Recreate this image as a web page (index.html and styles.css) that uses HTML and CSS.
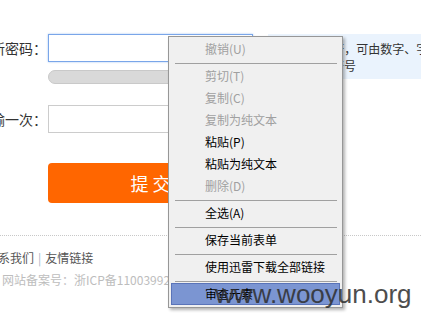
FILE: index.html
```html
<!DOCTYPE html>
<html lang="zh-CN">
<head>
<meta charset="utf-8">
<title>修改密码</title>
<link rel="stylesheet" href="styles.css">
</head>
<body>
<div class="page">
  <div class="row row-pwd">
    <label class="lbl">新密码：</label>
    <div class="field">
      <input class="inp inp-focus" type="password">
      <div class="strength"></div>
    </div>
    <div class="hint">6-20位字符，可由数字、字<br>母、特殊符号</div>
  </div>
  <div class="row row-confirm">
    <label class="lbl">再输一次：</label>
    <div class="field">
      <input class="inp" type="password">
    </div>
  </div>
  <div class="row row-submit">
    <div class="lbl"></div>
    <button class="submit" type="button">提 交</button>
  </div>
  <div class="footer">
    <div class="links"><a class="link">联系我们</a><span class="sep">|</span><a class="link">友情链接</a></div>
    <div class="icp">网站备案号：浙ICP备11003992号</div>
  </div>
</div>

<div class="ctx-menu">
  <div class="item disabled">撤销(U)</div>
  <div class="divider"></div>
  <div class="item disabled">剪切(T)</div>
  <div class="item disabled">复制(C)</div>
  <div class="item disabled">复制为纯文本</div>
  <div class="item">粘贴(P)</div>
  <div class="item">粘贴为纯文本</div>
  <div class="item disabled">删除(D)</div>
  <div class="divider"></div>
  <div class="item">全选(A)</div>
  <div class="divider"></div>
  <div class="item">保存当前表单</div>
  <div class="divider"></div>
  <div class="item">使用迅雷下载全部链接</div>
  <div class="divider"></div>
  <div class="item active">审查元素</div>
</div>

<div class="watermark">www.wooyun.org</div>
</body>
</html>
```
FILE: styles.css
```css
html, body {
  margin: 0;
  padding: 0;
  background: #ffffff;
}
body {
  width: 421px;
  height: 321px;
  overflow: hidden;
  position: relative;
  font-family: "Noto Sans CJK SC", "Microsoft YaHei", sans-serif;
  color: #333;
}
.page {
  padding-top: 34px;
}
.row {
  display: flex;
  align-items: flex-start;
}
.lbl {
  flex: 0 0 47px;
  width: 47px;
  margin-right: 1px;
  height: 28px;
  display: flex;
  align-items: center;
  justify-content: flex-end;
  white-space: nowrap;
  font-size: 14px;
  color: #333;
}
.field {
  width: 205px;
  flex: 0 0 205px;
}
.inp {
  display: block;
  box-sizing: border-box;
  width: 205px;
  height: 28px;
  margin: 0;
  padding: 0 6px;
  border: 1px solid #cccccc;
  background: #fff;
  outline: none;
}
.inp-focus {
  border-color: #7aa6e9;
  box-shadow: 0 0 2px #a9c7f2;
}
.strength {
  margin-top: 8px;
  box-sizing: border-box;
  height: 14px;
  border-radius: 7px;
  background: #d9d9d9;
  border: 1px solid #c9c9c9;
}
.hint {
  flex: 1 1 auto;
  margin-left: 15px;
  box-sizing: border-box;
  height: 45px;
  padding: 6px 0 0 16px;
  background: #eaf3fd;
  font-size: 12px;
  line-height: 17px;
  color: #333;
  white-space: nowrap;
  overflow: hidden;
}
.row-confirm {
  margin-top: 21px;
}
.row-submit {
  margin-top: 30px;
}
.submit {
  width: 205px;
  height: 40px;
  margin: 0;
  padding: 0;
  border: none;
  border-radius: 4px;
  background: #ff6600;
  color: #ffffff;
  font-family: "Noto Sans CJK SC", sans-serif;
  font-size: 18px;
  line-height: 40px;
}
.footer {
  margin-top: 32px;
  border-top: 1px dotted #c8c8c8;
  padding-top: 12px;
  font-size: 12px;
}
.links {
  margin-left: -14px;
  line-height: 20px;
  white-space: nowrap;
  color: #555;
}
.link {
  color: #555;
}
.sep {
  margin: 0 4px;
  color: #a9b6c8;
}
.icp {
  margin-top: 2px;
  margin-left: 2px;
  line-height: 20px;
  white-space: nowrap;
  color: #bdbdbd;
}

/* context menu overlay */
.ctx-menu {
  position: absolute;
  left: 168px;
  top: 36px;
  width: 175px;
  box-sizing: border-box;
  padding: 1px 2px 2px 2px;
  background: #f0f0f0;
  border: 1px solid #979797;
  box-shadow: 2px 2px 3px rgba(0, 0, 0, 0.3);
  font-family: "Noto Sans CJK SC", sans-serif;
  font-size: 12px;
}
.item {
  box-sizing: border-box;
  height: 22px;
  line-height: 22px;
  padding-left: 34px;
  color: #000;
  white-space: nowrap;
}
.item.disabled {
  color: #a0a0a0;
}
.item.active {
  background: #7b95d2;
  border: 1px solid #5a74b9;
  line-height: 20px;
  padding-left: 33px;
}
.divider {
  height: 0;
  margin: 3px 3px 1px 4px;
  border-top: 1px solid #a0a0a0;
}

.watermark {
  position: absolute;
  left: 215px;
  top: 281px;
  font-family: "Liberation Sans", Arial, sans-serif;
  font-size: 26px;
  line-height: 26px;
  color: #2e2e2e;
  opacity: 0.85;
  white-space: nowrap;
}
```
